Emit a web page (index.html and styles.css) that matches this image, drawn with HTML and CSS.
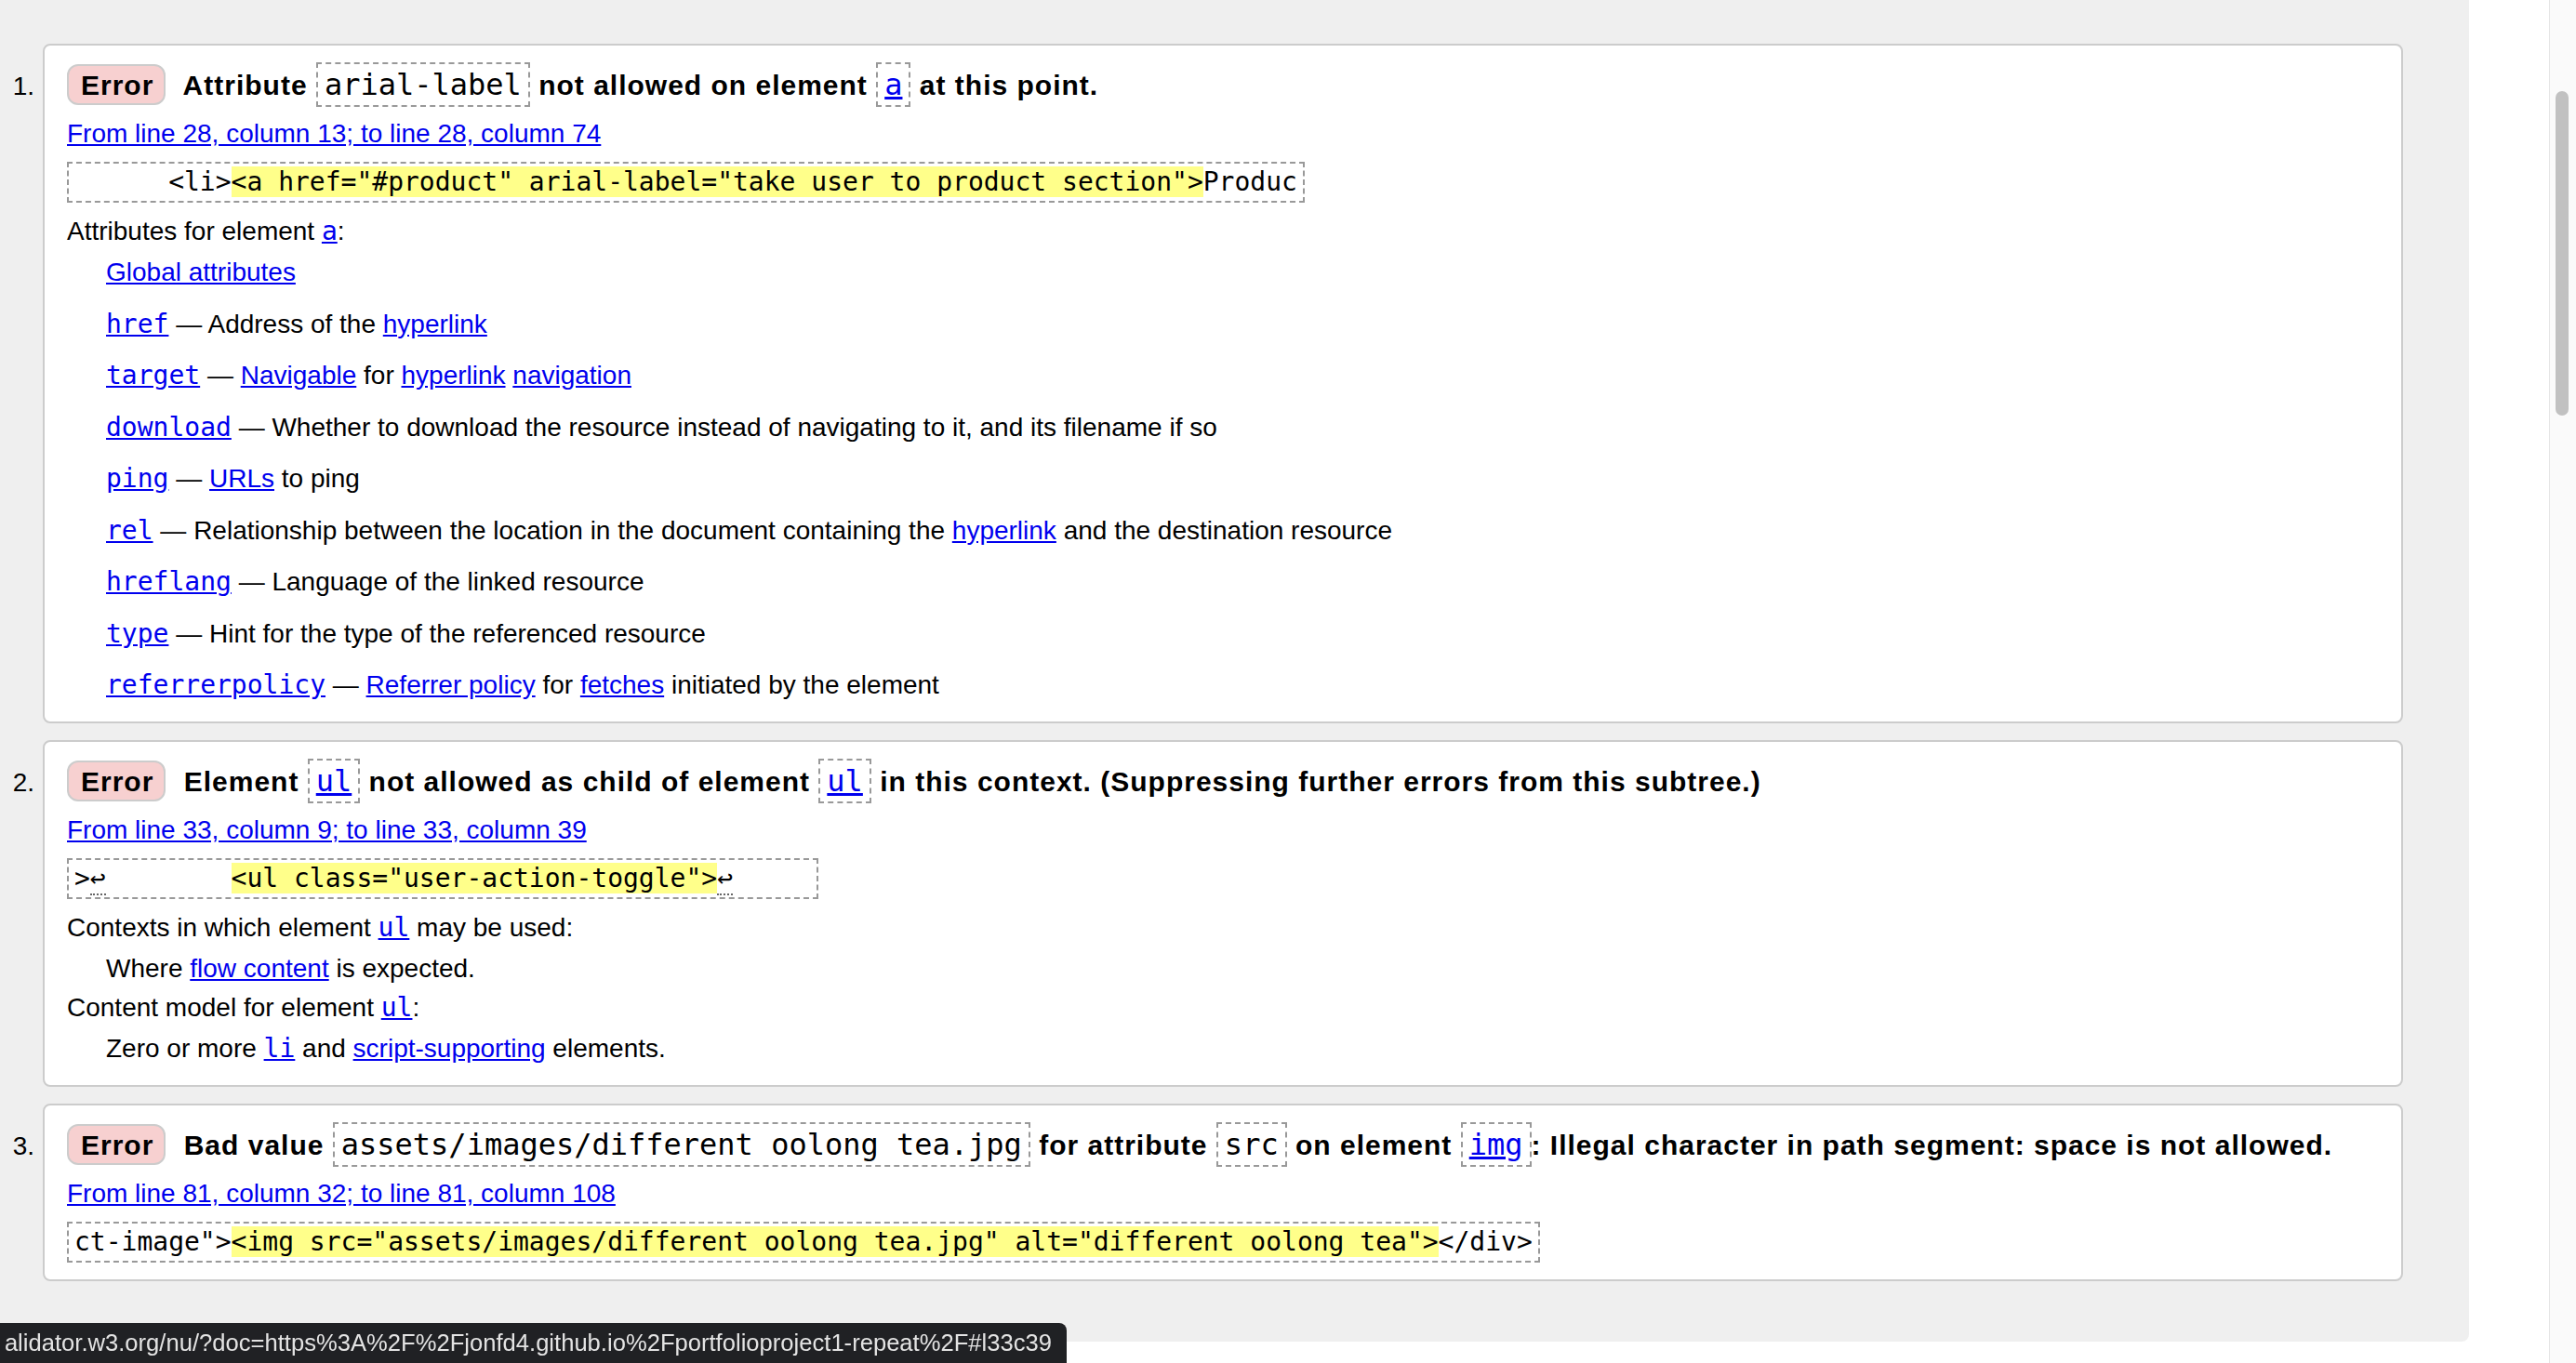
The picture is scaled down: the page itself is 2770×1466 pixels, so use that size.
FILE: index.html
```html
<!DOCTYPE html>
<html lang="en">
<head>
<meta charset="utf-8">
<title>Nu Html Checker results</title>
<link rel="stylesheet" href="styles.css">
</head>
<body>
<div class="viewport">
  <div class="results">
    <ol class="messages">
      <li class="message">
        <span class="num">1.</span>
        <div class="card">
          <p class="title"><strong class="badge">Error</strong> Attribute <code class="k">arial-label</code> not allowed on element <code class="k"><a href="#a">a</a></code> at this point.</p>
          <p class="loc"><a href="#l28c74">From line 28, column 13; to line 28, column 74</a></p>
          <code class="extract">      &lt;li&gt;<mark>&lt;a href="#product" arial-label="take user to product section"&gt;</mark>Produc</code>
          <dl class="attrs">
            <dt>Attributes for element <code><a href="#a">a</a></code>:</dt>
            <dd><a href="#global">Global attributes</a></dd>
            <dd><code><a href="#href">href</a></code> — Address of the <a href="#hyperlink">hyperlink</a></dd>
            <dd><code><a href="#target">target</a></code> — <a href="#navigable">Navigable</a> for <a href="#hyperlink">hyperlink</a> <a href="#navigation">navigation</a></dd>
            <dd><code><a href="#download">download</a></code> — Whether to download the resource instead of navigating to it, and its filename if so</dd>
            <dd><code><a href="#ping">ping</a></code> — <a href="#urls">URLs</a> to ping</dd>
            <dd><code><a href="#rel">rel</a></code> — Relationship between the location in the document containing the <a href="#hyperlink">hyperlink</a> and the destination resource</dd>
            <dd><code><a href="#hreflang">hreflang</a></code> — Language of the linked resource</dd>
            <dd><code><a href="#type">type</a></code> — Hint for the type of the referenced resource</dd>
            <dd><code><a href="#referrerpolicy">referrerpolicy</a></code> — <a href="#referrer-policy">Referrer policy</a> for <a href="#fetches">fetches</a> initiated by the element</dd>
          </dl>
        </div>
      </li>
      <li class="message">
        <span class="num">2.</span>
        <div class="card">
          <p class="title"><strong class="badge">Error</strong> Element <code class="k"><a href="#ul">ul</a></code> not allowed as child of element <code class="k"><a href="#ul">ul</a></code> in this context. (Suppressing further errors from this subtree.)</p>
          <p class="loc"><a href="#l33c39">From line 33, column 9; to line 33, column 39</a></p>
          <code class="extract">&gt;<span class="lf">↩</span>        <mark>&lt;ul class="user-action-toggle"&gt;</mark><span class="lf">↩</span>     </code>
          <dl class="attrs">
            <dt>Contexts in which element <code><a href="#ul">ul</a></code> may be used:</dt>
            <dd>Where <a href="#flow">flow content</a> is expected.</dd>
            <dt>Content model for element <code><a href="#ul">ul</a></code>:</dt>
            <dd>Zero or more <code><a href="#li">li</a></code> and <a href="#script-supporting">script-supporting</a> elements.</dd>
          </dl>
        </div>
      </li>
      <li class="message">
        <span class="num">3.</span>
        <div class="card">
          <p class="title"><strong class="badge">Error</strong> Bad value <code class="k">assets/images/different oolong tea.jpg</code> for attribute <code class="k">src</code> on element <code class="k"><a href="#img">img</a></code>: Illegal character in path segment: space is not allowed.</p>
          <p class="loc"><a href="#l81c108">From line 81, column 32; to line 81, column 108</a></p>
          <code class="extract">ct-image"&gt;<mark>&lt;img src="assets/images/different oolong tea.jpg" alt="different oolong tea"&gt;</mark>&lt;/div&gt;</code>
        </div>
      </li>
    </ol>
  </div>
</div>
<div class="scrollbar"><div class="thumb"></div></div>
<div class="status"><span class="status-text">alidator.w3.org/nu/?doc=https%3A%2F%2Fjonfd4.github.io%2Fportfolioproject1-repeat%2F#l33c39</span></div>
</body>
</html>
```

FILE: styles.css
```css
html, body {
  margin: 0;
  padding: 0;
}

body {
  display: flex;
  height: 1466px;
  overflow: hidden;
  background: #ffffff;
  color: #000000;
  font-family: "Liberation Sans", Arial, sans-serif;
  font-size: 28px;
}

a {
  color: #0000ee;
  text-decoration: underline;
}

code {
  font-family: "DejaVu Sans Mono", "Liberation Mono", monospace;
  font-size: 28px;
}

.viewport {
  flex: 1;
  min-width: 0;
}

.results {
  width: 2655px;
  box-sizing: border-box;
  background: #efefef;
  padding: 47px 71px 65px 0;
  border-bottom-right-radius: 8px;
}

.messages {
  list-style: none;
  margin: 0;
  padding: 0;
}

.message {
  display: flex;
  align-items: baseline;
  margin-bottom: 18px;
}

.message:last-child {
  margin-bottom: 0;
}

.num {
  flex: none;
  width: 46px;
  box-sizing: border-box;
  padding-right: 9px;
  text-align: right;
  font-size: 28px;
  line-height: 32px;
}

.card {
  flex: 1;
  min-width: 0;
  background: #ffffff;
  border: 2px solid #cccccc;
  border-radius: 8px;
  padding: 18px 24px 18px 24px;
}

.title {
  margin: 0;
  font-weight: bold;
  font-size: 30px;
  line-height: 32px;
  letter-spacing: 1px;
  white-space: nowrap;
}

.badge {
  display: inline-block;
  background: #f7d0d0;
  border: 2px solid #cccccc;
  border-radius: 12px;
  padding: 5px 11px 3px 13px;
  margin-right: 10px;
  line-height: 32px;
}

.k {
  display: inline-block;
  font-size: 32px;
  line-height: 40px;
  font-weight: normal;
  letter-spacing: 0;
  padding: 2px 7px;
  border: 2px dashed #999999;
}

.loc {
  margin: 8px 0 9px;
  line-height: 42px;
}

.extract {
  display: block;
  width: fit-content;
  border: 2px dashed #999999;
  padding: 4px 6px;
  font-size: 28px;
  line-height: 32px;
  white-space: pre;
}

.extract mark {
  background: #ffff8a;
  color: #000000;
}

.lf {
  border-bottom: 2px dotted #666666;
}

.attrs {
  margin: 10px 0 0;
  line-height: 42px;
}

.attrs dt {
  margin: 0;
}

.attrs dd {
  margin: 2px 0 0 42px;
}

.attrs dd + dd {
  margin-top: 13.5px;
}

.scrollbar {
  flex: none;
  width: 28px;
  border-left: 1px solid #e6e6e6;
  background: #fafafa;
}

.thumb {
  width: 14px;
  height: 349px;
  margin: 98px 0 0 6px;
  border-radius: 7px;
  background: #c1c1c1;
}

.status {
  position: fixed;
  left: 0;
  bottom: 0;
  width: 1147px;
  height: 43px;
  box-sizing: border-box;
  padding-right: 16px;
  background: #202124;
  border-top-right-radius: 8px;
  display: flex;
  justify-content: flex-end;
  overflow: hidden;
  white-space: nowrap;
}

.status-text {
  flex: none;
  color: #e3e3e3;
  font-family: "Liberation Sans", Arial, sans-serif;
  font-size: 25.6px;
  line-height: 43px;
}
```
